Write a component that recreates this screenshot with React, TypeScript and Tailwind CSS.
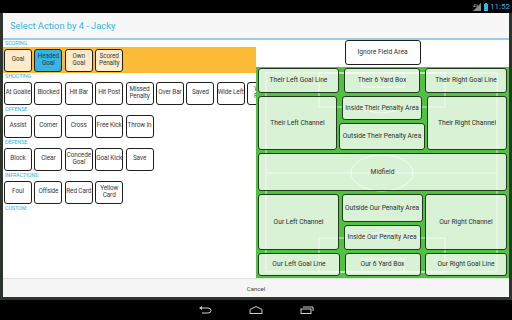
import React from "react";

const sections: { title: string; items: string[]; orange?: boolean }[] = [
  { title: "SCORING", items: ["Goal", "Headed\nGoal", "Own\nGoal", "Scored\nPenalty"], orange: true },
  {
    title: "SHOOTING",
    items: ["At Goalie", "Blocked", "Hit Bar", "Hit Post", "Missed\nPenalty", "Over Bar", "Saved", "Wide Left", "Wide\nRight"],
  },
  { title: "OFFENSE", items: ["Assist", "Corner", "Cross", "Free Kick", "Throw In"] },
  { title: "DEFENSE", items: ["Block", "Clear", "Concede\nGoal", "Goal Kick", "Save"] },
  { title: "INFRACTIONS", items: ["Foul", "Offside", "Red Card", "Yellow\nCard"] },
];

const ActionButton = ({ text, orange }: { text: string; orange?: boolean }) => {
  let bg = "bg-white";
  if (orange) bg = text === "Headed\nGoal" ? "bg-[#33b5e5]" : "bg-[#fdebc9]";
  return (
    <div
      className={`${bg} w-[28px] h-[23px] shrink-0 rounded-[3px] border border-[#1e1e1e] flex items-center justify-center text-center text-[6.4px] leading-[7.5px] text-[#3a3a3a] whitespace-pre overflow-hidden tracking-[-0.1px]`}
    >
      {text}
    </div>
  );
};

const Cell = ({ text, className }: { text: string; className: string }) => (
  <div
    className={`${className} relative rounded-[3px] border border-[#1f3a1c] bg-white/[0.78] flex items-center justify-center text-center text-[6.7px] text-[#2f2f2f] whitespace-nowrap`}
  >
    {text}
  </div>
);

const Pitch = () => (
  <svg className="absolute inset-0" width="253" height="211" viewBox="0 0 253 211">
    <g fill="none" stroke="#ffffff" strokeWidth="0.8" opacity="0.9">
      <rect x="10" y="6" width="231" height="199" />
      <line x1="10" y1="106" x2="241" y2="106" />
      <ellipse cx="126" cy="106" rx="31" ry="18" />
      <rect x="63" y="6" width="126" height="34" />
      <rect x="106" y="6" width="42" height="14" />
      <path d="M104 40 Q126 52 148 40" />
      <rect x="63" y="171" width="126" height="34" />
      <rect x="106" y="192" width="42" height="13" />
      <path d="M104 171 Q126 159 148 171" />
    </g>
  </svg>
);

const App: React.FC = () => {
  return (
    <div className="w-[512px] h-[320px] bg-black flex flex-col font-['Roboto','Liberation_Sans',sans-serif] overflow-hidden">
      {/* status bar */}
      <div className="h-[13px] flex items-center justify-end pr-[2px] gap-[2px]">
        <svg width="9" height="8" viewBox="0 0 9 8">
          <path d="M8 0 L8 8 L0 8 Z" fill="#8a8a8a" />
          <text x="0" y="4" fontSize="4" fill="#bbb">4G</text>
        </svg>
        <svg width="4" height="8" viewBox="0 0 4 8">
          <rect x="1" y="0" width="2" height="1" fill="#33b5e5" />
          <rect x="0" y="1" width="4" height="7" fill="#33b5e5" />
        </svg>
        <span className="text-[8px] text-[#33b5e5] leading-none">11:52</span>
      </div>

      {/* dialog area */}
      <div className="flex-1 bg-[#2d332d] px-[3px] pb-[3px]">
        <div className="h-full bg-white flex flex-col">
          <div className="h-[25px] bg-[#f7f7f7] flex items-center px-[7px] text-[9.3px] text-[#33b5e5]">
            Select Action by 4 - Jacky
          </div>
          <div className="h-[2px] bg-[#92d3ec]" />
          <div className="flex-1 flex">
            {/* left panel */}
            <div className="w-[253px] flex flex-col overflow-hidden">
              {sections.map((s) => (
                <div key={s.title} className="flex flex-col">
                  <div className="h-[7px] pl-[2px] text-[5.5px] leading-[7px] text-[#33b5e5] tracking-tight">{s.title}</div>
                  <div className={`h-[26px] flex items-center gap-[2.4px] pl-[1px] ${s.orange ? "bg-[#fcbb36]" : ""}`}>
                    {s.items.map((it) => (
                      <ActionButton key={it} text={it} orange={s.orange} />
                    ))}
                  </div>
                </div>
              ))}
              <div className="h-[7px] pl-[2px] text-[5.5px] leading-[7px] text-[#33b5e5] tracking-tight">CUSTOM</div>
            </div>

            {/* right panel */}
            <div className="w-[253px] flex flex-col">
              <div className="h-[27px] flex justify-center items-start">
                <div className="w-[76px] h-[25px] rounded-[3px] border border-[#1e1e1e] flex items-center justify-center text-[6.7px] text-[#333]">
                  Ignore Field Area
                </div>
              </div>
              <div className="relative h-[211px] bg-[#52c142] pt-[1px] px-[2px] flex flex-col gap-[3px]">
                <Pitch />
                <div className="h-[25px] flex justify-between">
                  <Cell text="Their Left Goal Line" className="w-[81px]" />
                  <Cell text="Their 6 Yard Box" className="w-[76px]" />
                  <Cell text="Their Right Goal Line" className="w-[82px]" />
                </div>
                <div className="h-[54px] flex justify-between">
                  <Cell text="Their Left Channel" className="w-[79px]" />
                  <div className="w-[86px] flex flex-col items-center gap-[3px]">
                    <Cell text="Inside Their Penalty Area" className="w-[80px] h-[24px]" />
                    <Cell text="Outside Their Penalty Area" className="w-[86px] h-[27px]" />
                  </div>
                  <Cell text="Their Right Channel" className="w-[80px]" />
                </div>
                <div className="h-[38px] flex">
                  <Cell text="Midfield" className="flex-1" />
                </div>
                <div className="h-[56px] flex justify-between">
                  <Cell text="Our Left Channel" className="w-[81px]" />
                  <div className="w-[81px] flex flex-col items-center gap-[3px]">
                    <Cell text="Outside Our Penalty Area" className="w-[81px] h-[28px]" />
                    <Cell text="Inside Our Penalty Area" className="w-[77px] h-[25px]" />
                  </div>
                  <Cell text="Our Right Channel" className="w-[82px]" />
                </div>
                <div className="h-[23px] flex justify-between">
                  <Cell text="Our Left Goal Line" className="w-[82px]" />
                  <Cell text="Our 6 Yard Box" className="w-[76px]" />
                  <Cell text="Our Right Goal Line" className="w-[82px]" />
                </div>
              </div>
            </div>
          </div>
          <div className="h-[19px] bg-[#f5f5f5] border-t border-[#e2e2e2] flex items-center justify-center text-[6px] text-[#444]">
            Cancel
          </div>
        </div>
      </div>

      {/* nav bar */}
      <div className="h-[20px] flex items-center justify-center gap-[37px]">
        <svg width="14" height="8" viewBox="0 0 14 8">
          <path d="M3 2 H10 Q13 2 13 4.5 Q13 7 10 7 H4" fill="none" stroke="#cfcfcf" strokeWidth="1" />
          <path d="M1 2 L4 0 L4 4 Z" fill="#cfcfcf" />
        </svg>
        <svg width="14" height="8" viewBox="0 0 14 8">
          <path d="M1 7.5 V3.5 L7 0.5 L13 3.5 V7.5 Z" fill="none" stroke="#cfcfcf" strokeWidth="1" />
        </svg>
        <svg width="14" height="8" viewBox="0 0 14 8">
          <rect x="1" y="3" width="10" height="4.5" fill="none" stroke="#cfcfcf" strokeWidth="1" />
          <path d="M3 1 H13 V5" fill="none" stroke="#cfcfcf" strokeWidth="1" />
        </svg>
      </div>
    </div>
  );
};

export default App;
